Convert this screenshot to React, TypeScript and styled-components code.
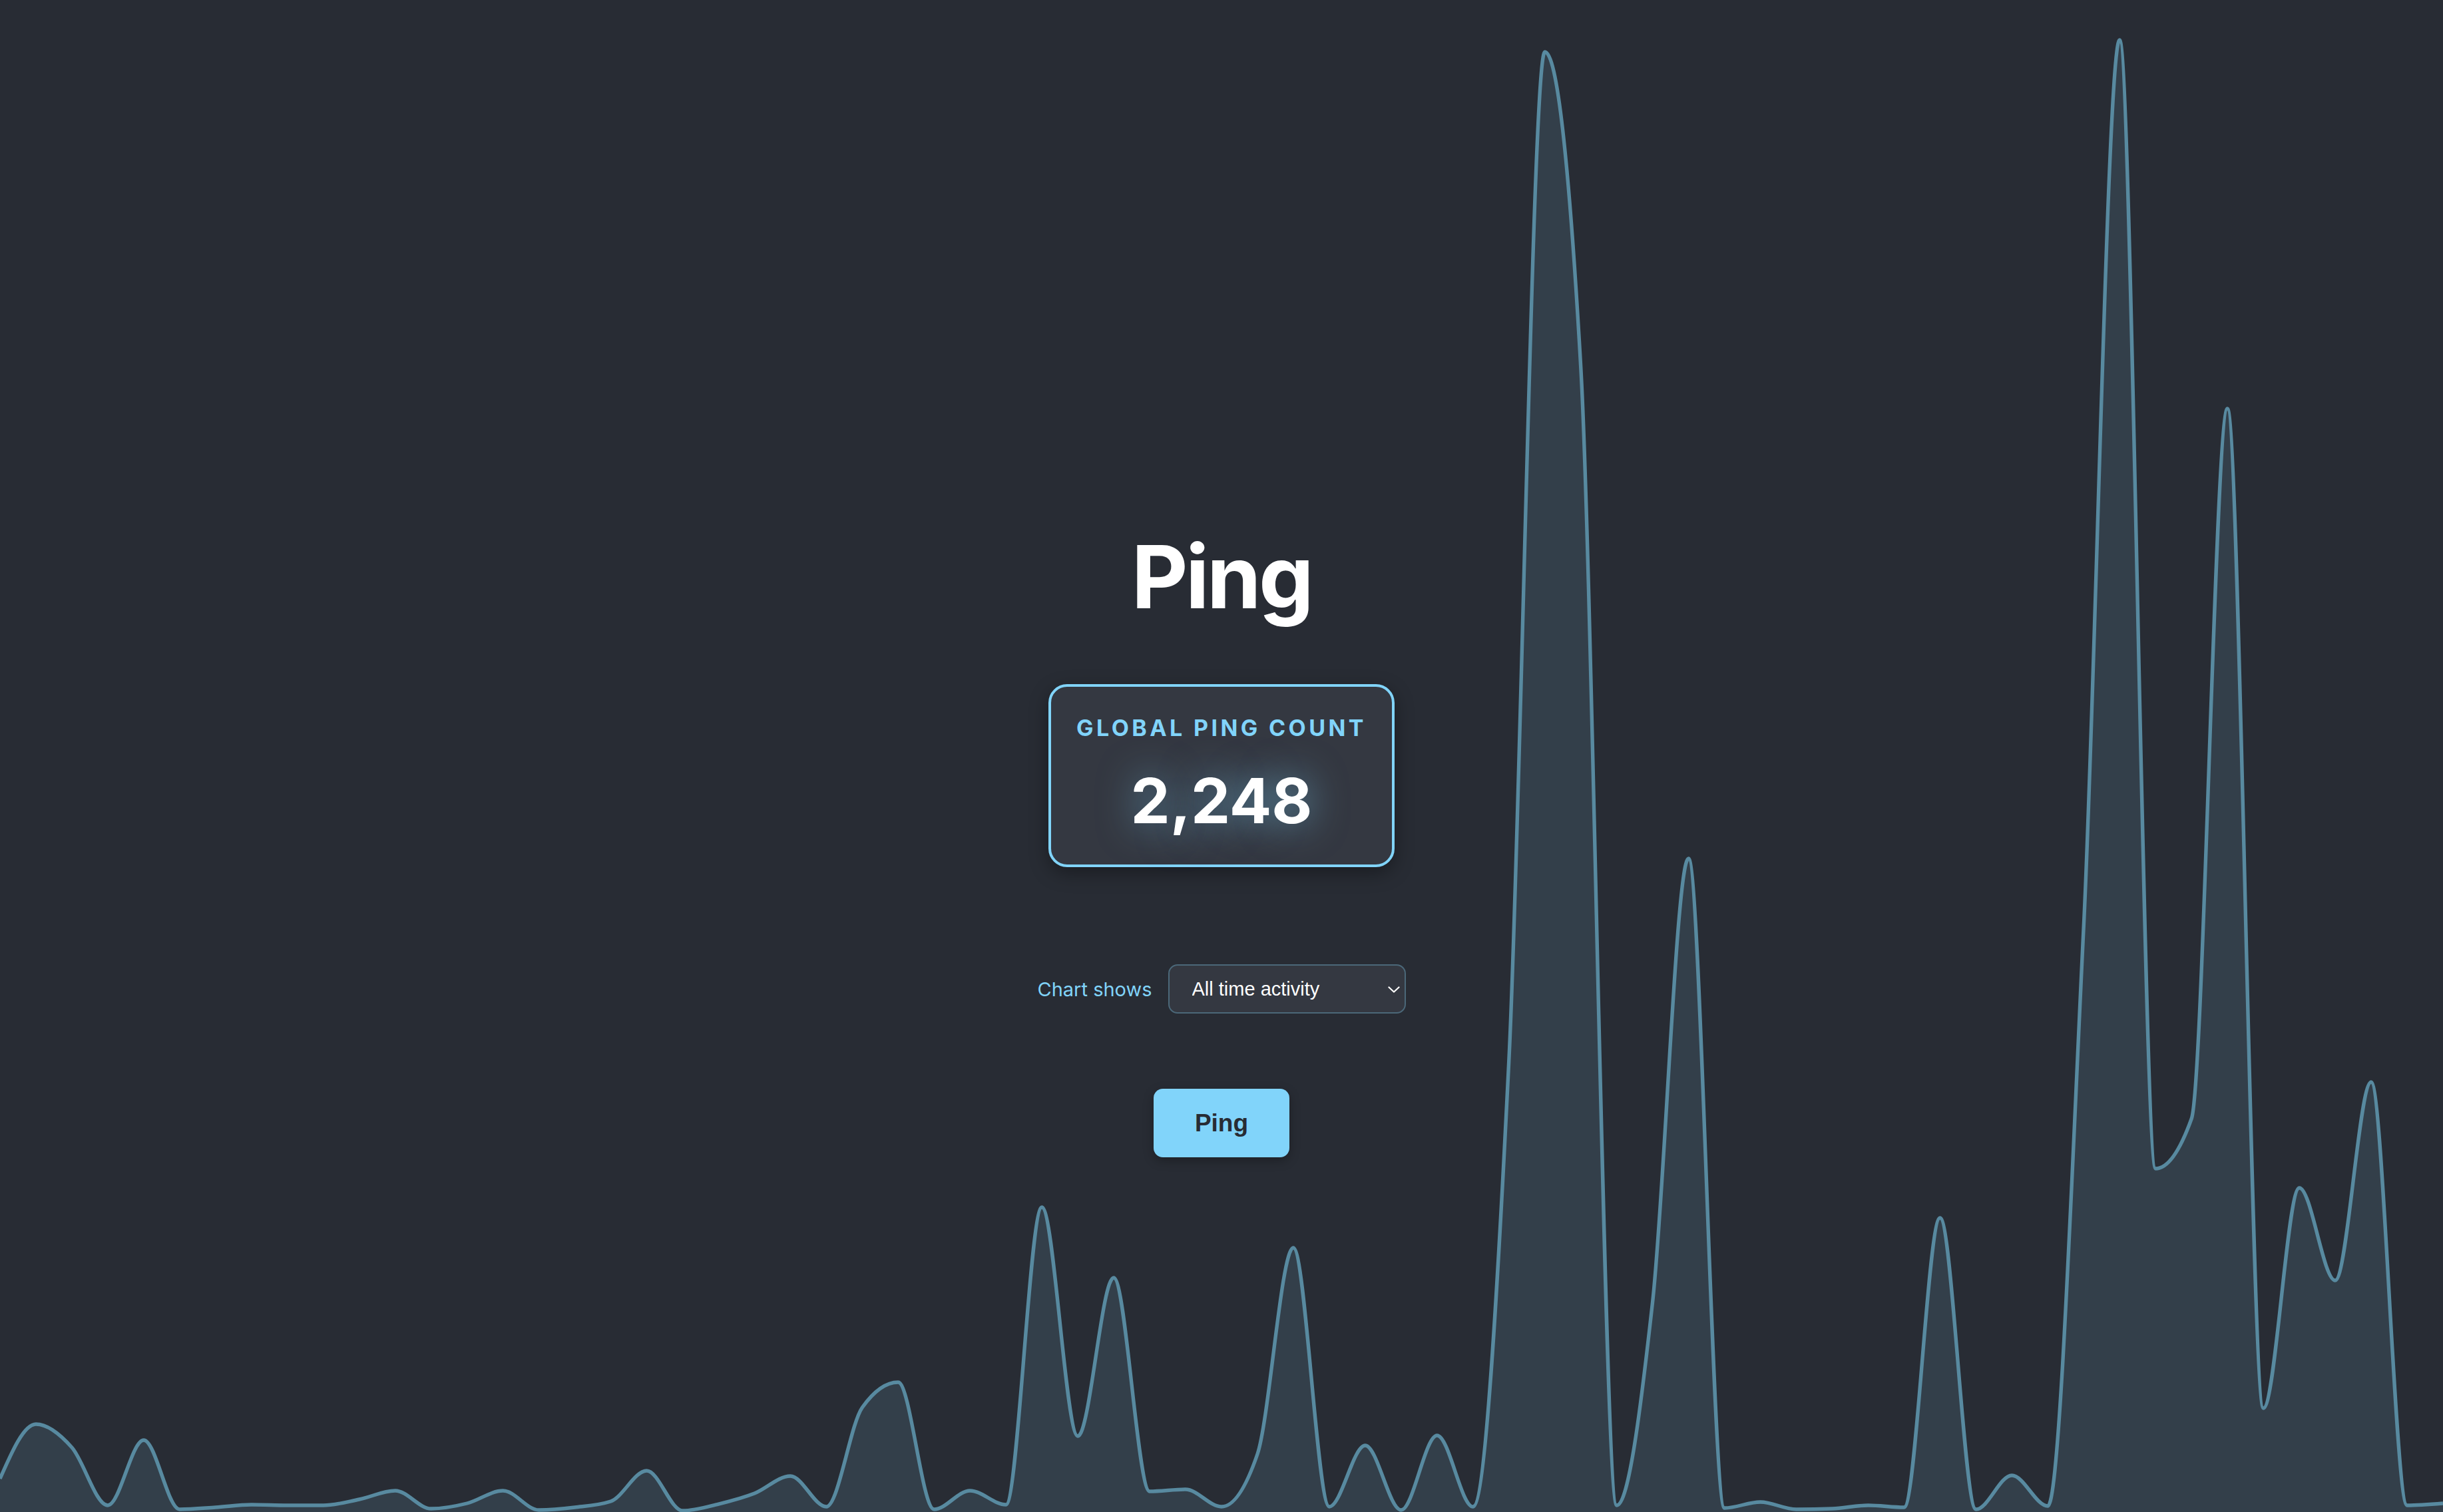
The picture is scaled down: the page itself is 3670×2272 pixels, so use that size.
import React from "react";
import styled, { createGlobalStyle } from "styled-components";

const GlobalStyle = createGlobalStyle`
  html, body {
    margin: 0;
    padding: 0;
    background: #282c34;
    overflow: hidden;
  }
  body {
    font-family: Inter, "Noto Sans", "Liberation Sans", sans-serif;
    color: #ffffff;
  }
  * { box-sizing: border-box; }
`;

const W = 3670;
const H = 2272;

const YS = [
  2222, 2140, 2175, 2262, 2164, 2268, 2265, 2261, 2262, 2262,
  2253, 2240, 2267, 2259, 2240, 2269, 2265, 2256, 2210, 2270,
  2260, 2244, 2218, 2264, 2115, 2077, 2268, 2240, 2261, 1814,
  2158, 1920, 2241, 2238, 2264, 2185, 1875, 2264, 2172, 2269,
  2157, 2264, 1594, 78, 551, 2262, 1956, 1290, 2266, 2257,
  2268, 2267, 2262, 2265, 1830, 2268, 2217, 2263, 1391, 60,
  1756, 1681, 614, 2116, 1785, 1924, 1626, 2262, 2259,
];

const sign = (v: number) => (v < 0 ? -1 : 1);

function monotonePath(ys: number[], width: number): string {
  const n = ys.length;
  const step = width / (n - 1);
  const xs = ys.map((_, i) => i * step);
  const t: number[] = new Array(n).fill(0);
  for (let i = 1; i < n - 1; i++) {
    const h0 = xs[i] - xs[i - 1];
    const h1 = xs[i + 1] - xs[i];
    const s0 = (ys[i] - ys[i - 1]) / h0;
    const s1 = (ys[i + 1] - ys[i]) / h1;
    const p = (s0 * h1 + s1 * h0) / (h0 + h1);
    t[i] =
      (sign(s0) + sign(s1)) *
        Math.min(Math.abs(s0), Math.abs(s1), 0.5 * Math.abs(p)) || 0;
  }
  t[0] = (3 * (ys[1] - ys[0]) / step - t[1]) / 2;
  t[n - 1] = (3 * (ys[n - 1] - ys[n - 2]) / step - t[n - 2]) / 2;
  let d = `M${xs[0]},${ys[0]}`;
  for (let i = 0; i < n - 1; i++) {
    const dx = (xs[i + 1] - xs[i]) / 3;
    d += ` C${xs[i] + dx},${ys[i] + dx * t[i]} ${xs[i + 1] - dx},${
      ys[i + 1] - dx * t[i + 1]
    } ${xs[i + 1]},${ys[i + 1]}`;
  }
  return d;
}

const Page = styled.div`
  display: grid;
  width: 100vw;
  height: 100vh;
  overflow: hidden;
  background: #282c34;
`;

const ChartLayer = styled.svg`
  grid-area: 1 / 1;
  width: 100%;
  height: 100%;
  display: block;
`;

const Content = styled.main`
  grid-area: 1 / 1;
  z-index: 1;
  display: flex;
  flex-direction: column;
  align-items: center;
  padding-top: 801px;
`;

const Title = styled.h1`
  margin: 0;
  font-family: Inter, "Noto Sans", sans-serif;
  font-weight: 700;
  font-size: 131px;
  line-height: 1;
  letter-spacing: -3.5px;
  color: #ffffff;
`;

const CountCard = styled.section`
  margin-top: 96px;
  width: 520px;
  height: 275px;
  padding: 42px 20px 0;
  display: flex;
  flex-direction: column;
  align-items: center;
  background: #343841;
  border: 4.7px solid #81d4fa;
  border-radius: 28px;
  box-shadow: 0 9px 28px rgba(0, 0, 0, 0.35);
`;

const CardLabel = styled.div`
  font-family: Inter, "Noto Sans", sans-serif;
  font-weight: 700;
  font-size: 34px;
  line-height: 40.8px;
  letter-spacing: 4.4px;
  color: #81d4fa;
  text-transform: uppercase;
  white-space: nowrap;
`;

const CardValue = styled.div`
  margin-top: 32px;
  font-family: Inter, "Noto Sans", sans-serif;
  font-weight: 700;
  font-size: 94px;
  line-height: 112.8px;
  color: #ffffff;
  text-shadow: 0 0 56px rgba(129, 212, 250, 0.6);
`;

const Controls = styled.div`
  margin-top: 146px;
  display: flex;
  align-items: center;
  gap: 24px;
`;

const ControlLabel = styled.label`
  font-family: Inter, "Noto Sans", sans-serif;
  font-size: 29px;
  color: #81d4fa;
`;

const SelectWrap = styled.div`
  position: relative;
  display: flex;
`;

const Select = styled.select`
  appearance: none;
  -webkit-appearance: none;
  width: 357px;
  height: 74px;
  padding: 0 60px 0 34px;
  background: #343841;
  color: #ffffff;
  border: 2.6px solid #4b6879;
  border-radius: 14px;
  font-family: "Liberation Sans", Arial, sans-serif;
  font-size: 29px;
  outline: none;
`;

const Chevron = styled.svg`
  position: absolute;
  right: 9px;
  top: 50%;
  width: 18px;
  height: 10px;
  margin-top: -4px;
  pointer-events: none;
`;

const PingButton = styled.button`
  margin-top: 113px;
  width: 204px;
  height: 103px;
  border: none;
  border-radius: 14px;
  background: #81d4fa;
  color: #282c34;
  font-family: "Liberation Sans", Arial, sans-serif;
  font-weight: 700;
  font-size: 37px;
  cursor: pointer;
  box-shadow: 0 5px 16px rgba(0, 0, 0, 0.28);
`;

export default function App() {
  const line = monotonePath(YS, W);
  const area = `${line} L${W},${H} L0,${H} Z`;
  return (
    <Page>
      <GlobalStyle />
      <ChartLayer viewBox={`0 0 ${W} ${H}`} preserveAspectRatio="none">
        <path d={area} fill="#333f4a" />
        <path
          d={line}
          fill="none"
          stroke="#588aa0"
          strokeWidth={5.4}
          strokeLinejoin="round"
        />
      </ChartLayer>
      <Content>
        <Title>Ping</Title>
        <CountCard>
          <CardLabel>Global Ping Count</CardLabel>
          <CardValue>2,248</CardValue>
        </CountCard>
        <Controls>
          <ControlLabel htmlFor="range">Chart shows</ControlLabel>
          <SelectWrap>
            <Select id="range" defaultValue="all">
              <option value="all">All time activity</option>
              <option value="day">Last 24 hours</option>
              <option value="hour">Last hour</option>
            </Select>
            <Chevron viewBox="0 0 18 10">
              <path
                d="M1.5 1.5 L9 8.5 L16.5 1.5"
                fill="none"
                stroke="#ffffff"
                strokeWidth={2.2}
                strokeLinecap="round"
                strokeLinejoin="round"
              />
            </Chevron>
          </SelectWrap>
        </Controls>
        <PingButton>Ping</PingButton>
      </Content>
    </Page>
  );
}
